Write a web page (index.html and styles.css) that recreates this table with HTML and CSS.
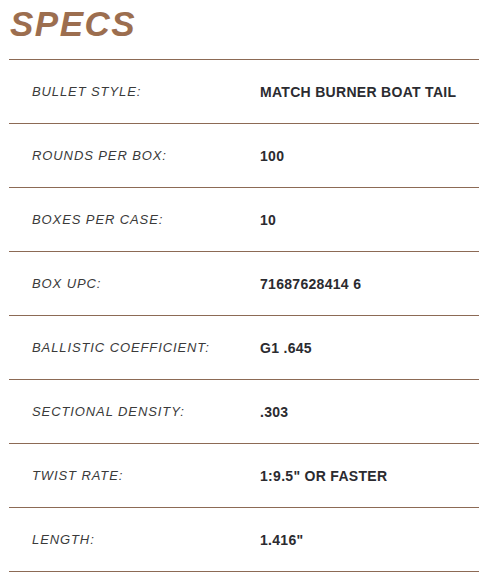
FILE: index.html
```html
<!DOCTYPE html>
<html>
<head>
<meta charset="utf-8">
<link rel="stylesheet" href="styles.css">
</head>
<body>
<div class="specs">
  <h2 class="title">SPECS</h2>
  <div class="table">
    <div class="row"><div class="label">BULLET STYLE:</div><div class="value">MATCH BURNER BOAT TAIL</div></div>
    <div class="row"><div class="label">ROUNDS PER BOX:</div><div class="value">100</div></div>
    <div class="row"><div class="label">BOXES PER CASE:</div><div class="value">10</div></div>
    <div class="row"><div class="label">BOX UPC:</div><div class="value">71687628414 6</div></div>
    <div class="row"><div class="label">BALLISTIC COEFFICIENT:</div><div class="value">G1 .645</div></div>
    <div class="row"><div class="label">SECTIONAL DENSITY:</div><div class="value">.303</div></div>
    <div class="row"><div class="label">TWIST RATE:</div><div class="value">1:9.5" OR FASTER</div></div>
    <div class="row"><div class="label">LENGTH:</div><div class="value">1.416"</div></div>
  </div>
</div>
</body>
</html>
```
FILE: styles.css
```css
html, body {
  margin: 0;
  padding: 0;
  background: #ffffff;
}
.specs {
  padding-left: 9px;
  font-family: "Liberation Sans", Arial, sans-serif;
}
.title {
  margin: 0;
  height: 59px;
  box-sizing: border-box;
  padding-left: 1px;
  padding-top: 4px;
  font-size: 35px;
  line-height: 40px;
  font-weight: bold;
  font-style: italic;
  color: #9c6e4f;
  letter-spacing: 1.5px;
}
.table {
  display: flex;
  flex-direction: column;
}
.row {
  display: flex;
  align-items: center;
  height: 64px;
  box-sizing: border-box;
  border-top: 1px solid #8c6a55;
}
.row:last-child {
  height: 65px;
  border-bottom: 1px solid #8c6a55;
}
.label {
  width: 251px;
  box-sizing: border-box;
  padding-left: 23px;
  font-size: 13px;
  font-style: italic;
  color: #3a3a3a;
  letter-spacing: 0.9px;
}
.value {
  font-size: 14px;
  font-weight: bold;
  color: #2b2b30;
  letter-spacing: 0.3px;
}
```
